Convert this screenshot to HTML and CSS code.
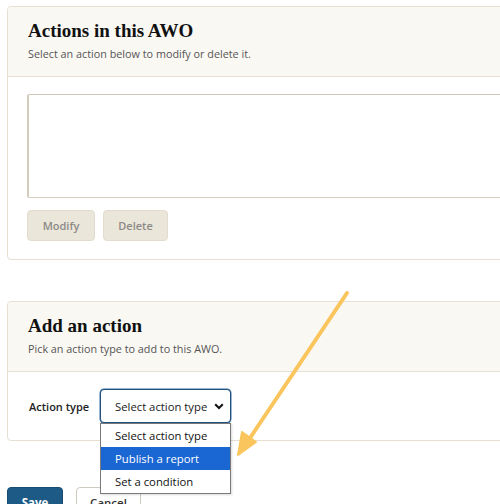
FILE: index.html
```html
<!DOCTYPE html>
<html>
<head>
<meta charset="utf-8">
<link rel="stylesheet" href="styles.css">
</head>
<body>
<div class="page">
  <section class="card card-actions">
    <header class="card-head">
      <h2 class="card-title">Actions in this AWO</h2>
      <p class="card-sub">Select an action below to modify or delete it.</p>
    </header>
    <div class="card-body">
      <div class="listbox"></div>
      <div class="btn-row">
        <button class="btn btn-disabled btn-modify">Modify</button>
        <button class="btn btn-disabled btn-delete">Delete</button>
      </div>
    </div>
  </section>

  <section class="card card-add">
    <header class="card-head">
      <h2 class="card-title">Add an action</h2>
      <p class="card-sub">Pick an action type to add to this AWO.</p>
    </header>
    <div class="card-body field-row">
      <span class="field-label">Action type</span>
      <div class="select-wrap">
        <div class="select">
          <span class="select-text">Select action type</span>
          <svg class="chev" width="10" height="7" viewBox="0 0 10 7"><path d="M1.2 1.3 L5 5 L8.8 1.3" fill="none" stroke="#111" stroke-width="2"/></svg>
        </div>
        <ul class="dropdown">
          <li class="opt">Select action type</li>
          <li class="opt opt-active">Publish a report</li>
          <li class="opt">Set a condition</li>
        </ul>
      </div>
    </div>
  </section>

  <div class="footer-btns">
    <button class="btn btn-save">Save</button>
    <button class="btn btn-cancel">Cancel</button>
  </div>

  <svg class="callout" width="500" height="504" viewBox="0 0 500 504">
    <line x1="347" y1="293" x2="250" y2="438" stroke="#fac55c" stroke-width="4" stroke-linecap="round"/>
    <polygon points="238,455 242,432 256,442" fill="#fac55c" stroke="#fac55c" stroke-width="2" stroke-linejoin="round"/>
  </svg>
</div>
</body>
</html>
```
FILE: styles.css
```css
* { box-sizing: border-box; }
html, body { margin: 0; padding: 0; background: #fff; overflow: hidden; }
body { width: 500px; height: 504px; font-family: "Open Sans", "Noto Sans", sans-serif; color: #222; }
.page { position: relative; padding: 6px 0 0 7px; width: 500px; height: 504px; overflow: hidden; }

.card {
  width: 520px;
  border: 1px solid #e6e0d3;
  border-radius: 4px;
  background: #fff;
}
.card-add { margin-top: 41px; }

.card-head {
  background: #faf8f3;
  border-bottom: 1px solid #e6e0d3;
  border-radius: 4px 4px 0 0;
  padding: 11px 20px 12px 20px;
}
.card-title {
  margin: 0;
  font-family: "Liberation Serif", serif;
  font-weight: bold;
  font-size: 19px;
  line-height: 26px;
  color: #111;
}
.card-sub {
  margin: 0;
  font-size: 10.8px;
  line-height: 16px;
  color: #555;
  height: 20px;
  padding-top: 2px;
}
.card-body { padding: 17px 20px 18px 19px; }

.listbox {
  height: 104px;
  border: 1px solid #d5cebf;
  border-top-color: #cfc8b8;
  border-left: 2px solid #d3ccbc;
  border-radius: 2px;
  background: #fff;
}
.btn-row { display: flex; gap: 8px; margin-top: 12px; }

.btn {
  font-family: "Open Sans", "Noto Sans", sans-serif;
  font-weight: 600;
  font-size: 11px;
  border-radius: 4px;
  height: 31px;
  padding: 0;
}
.btn-disabled {
  background: #ebe6da;
  border: 1px solid #e2dccf;
  color: #8c8a86;
}
.btn-modify { width: 68px; }
.btn-delete { width: 65px; }

.field-row { display: flex; align-items: center; padding-left: 21px; padding-bottom: 17px; }
.field-label { font-size: 11px; font-weight: 600; color: #222; width: 71px; }

.select-wrap { position: relative; }
.select {
  width: 131px;
  height: 34px;
  border: 1px solid #21507c;
  border-radius: 4px;
  display: flex;
  align-items: center;
  justify-content: space-between;
  padding: 0 6px 0 14px;
  background: #fff;
  box-shadow: 0 0 0 0.5px #3a6f9e;
}
.select-text { font-size: 11.3px; color: #1a1a1a; white-space: nowrap; }
.chev { margin-top: 1px; flex: none; }

.dropdown {
  position: absolute;
  left: 0;
  top: 34px;
  width: 131px;
  margin: 0;
  padding: 0;
  list-style: none;
  background: #fff;
  border: 1px solid #7a7a7a;
  box-shadow: 1px 1px 2px rgba(0,0,0,0.15);
  z-index: 3;
}
.opt {
  height: 23px;
  line-height: 23px;
  padding-left: 14px;
  font-size: 11.3px;
  color: #111;
  white-space: nowrap;
}
.opt-active { background: #1a66d2; color: #fff; }

.footer-btns { display: flex; gap: 13px; margin-top: 46px; }
.btn-save {
  width: 56px;
  height: 30px;
  background: #1d5b86;
  border: 1px solid #174b70;
  color: #fff;
  font-weight: 700;
  font-size: 11.5px;
  padding: 0;
}
.btn-cancel {
  width: 65px;
  height: 30px;
  background: #fff;
  border: 1px solid #cfcac0;
  color: #333;
  font-weight: 600;
  font-size: 11.5px;
  padding: 0;
}

.callout { position: absolute; left: 0; top: 0; pointer-events: none; z-index: 5; }
```
